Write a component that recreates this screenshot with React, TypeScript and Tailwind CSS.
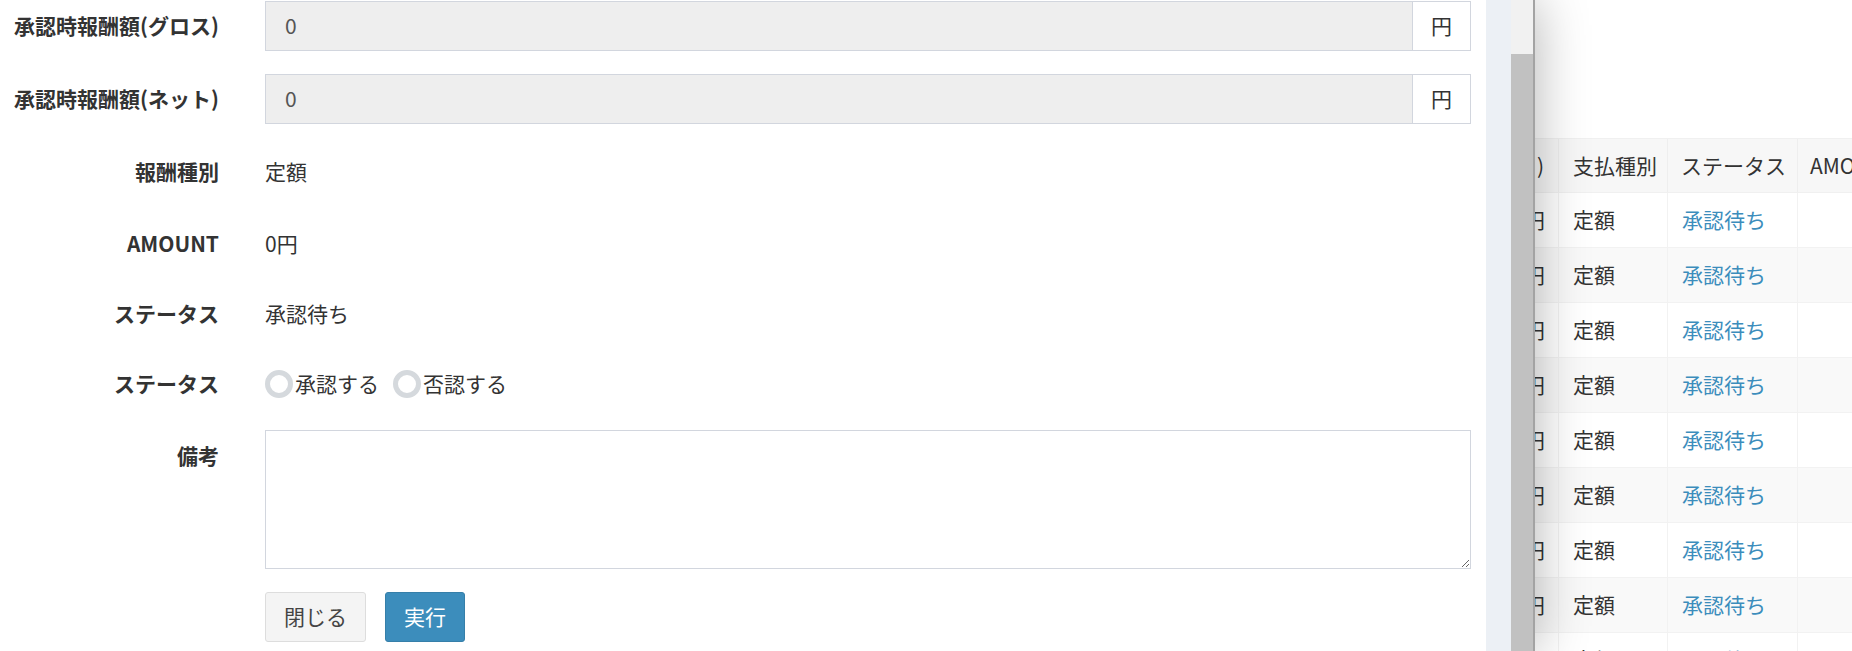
import React from "react";

const rows = Array.from({ length: 9 });

function Radio({ label }: { label: string }) {
  return (
    <label className="flex items-center">
      <span className="h-[28px] w-[28px] rounded-full border-[5px] border-[#d5d9dd] bg-white" />
      <span className="ml-[2px]">{label}</span>
    </label>
  );
}

function Row({ label, children, className = "" }: { label: string; children: React.ReactNode; className?: string }) {
  return (
    <div className={`flex h-[50px] items-center ${className}`}>
      <div className="w-[219px] shrink-0 whitespace-nowrap text-right font-bold">{label}</div>
      <div className="ml-[46px] flex flex-1 items-center">{children}</div>
    </div>
  );
}

export default function App() {
  return (
    <div className="relative h-[651px] w-[1852px] overflow-hidden bg-white font-['Noto_Sans_CJK_JP',sans-serif] text-[21px] text-[#333]">
      {/* 背景の一覧ページ */}
      <div className="pl-[1300px] pt-[138px]">
        <div className="flex h-[55px] items-center border-y border-[#f0f0f0] bg-[#f7f7f7]">
          <div className="w-[258px] shrink-0 whitespace-nowrap pr-[14px] text-right">承認時報酬額(ネット)</div>
          <div className="flex h-full w-[109px] shrink-0 items-center border-l border-[#eeeeee] pl-[14px]">支払種別</div>
          <div className="flex h-full w-[130px] shrink-0 items-center border-l border-[#eeeeee] pl-[13px]">ステータス</div>
          <div className="flex h-full flex-1 items-center whitespace-nowrap border-l border-[#eeeeee] pl-[12px]">AMOUNT</div>
        </div>
        {rows.map((_, i) => (
          <div
            key={i}
            className={`flex h-[55px] items-center border-b border-[#f2f2f2] ${i % 2 === 1 ? "bg-[#f9f9f9]" : "bg-white"}`}
          >
            <div className="w-[258px] shrink-0 pr-[13px] text-right">0円</div>
            <div className="flex h-full w-[109px] shrink-0 items-center border-l border-[#f2f2f2] pl-[14px]">定額</div>
            <div className="flex h-full w-[130px] shrink-0 items-center border-l border-[#f2f2f2] pl-[14px] text-[#3c8dbc]">
              承認待ち
            </div>
            <div className="h-full flex-1 border-l border-[#f2f2f2]" />
          </div>
        ))}
      </div>

      {/* 承認パネル */}
      <div className="absolute inset-y-0 left-0 flex w-[1535px] shadow-[0_0_50px_rgba(0,0,0,0.3)]">
        <div className="w-[1486px] bg-white pr-[15px] pt-[1px]">
          <Row label="承認時報酬額(グロス)">
            <div className="flex h-[50px] flex-1 items-center border border-[#d2d6de] bg-[#eeeeee] pl-[19px] text-[#555]">0</div>
            <div className="flex h-[50px] w-[58px] items-center justify-center border-y border-r border-[#d2d6de] bg-white">円</div>
          </Row>
          <Row label="承認時報酬額(ネット)" className="mt-[23px]">
            <div className="flex h-[50px] flex-1 items-center border border-[#d2d6de] bg-[#eeeeee] pl-[19px] text-[#555]">0</div>
            <div className="flex h-[50px] w-[58px] items-center justify-center border-y border-r border-[#d2d6de] bg-white">円</div>
          </Row>
          <Row label="報酬種別" className="mt-[23px]">定額</Row>
          <Row label="AMOUNT" className="mt-[22px]">0円</Row>
          <Row label="ステータス" className="mt-[20px]">承認待ち</Row>
          <Row label="ステータス" className="mt-[20px]">
            <Radio label="承認する" />
            <div className="ml-[14px]">
              <Radio label="否認する" />
            </div>
          </Row>
          <div className="mt-[21px] flex">
            <div className="w-[219px] shrink-0 pt-[11px] text-right font-bold leading-[28px]">備考</div>
            <textarea className="ml-[46px] h-[139px] flex-1 border border-[#d2d6de] bg-white outline-none" />
          </div>
          <div className="ml-[265px] mt-[23px] flex gap-[19px]">
            <button className="h-[50px] w-[101px] rounded-[3px] border border-[#dddddd] bg-[#f4f4f4] text-[#444]">閉じる</button>
            <button className="h-[50px] w-[80px] rounded-[3px] border border-[#367fa9] bg-[#3c8dbc] text-white">実行</button>
          </div>
        </div>
        <div className="w-[25px] bg-[#ecf0f5]" />
        <div className="flex w-[22px] flex-col bg-[#f1f1f1]">
          <div className="h-[54px]" />
          <div className="flex-1 bg-[#c1c1c1]" />
        </div>
        <div className="w-[2px] bg-[#a3a3a3]" />
      </div>
    </div>
  );
}
